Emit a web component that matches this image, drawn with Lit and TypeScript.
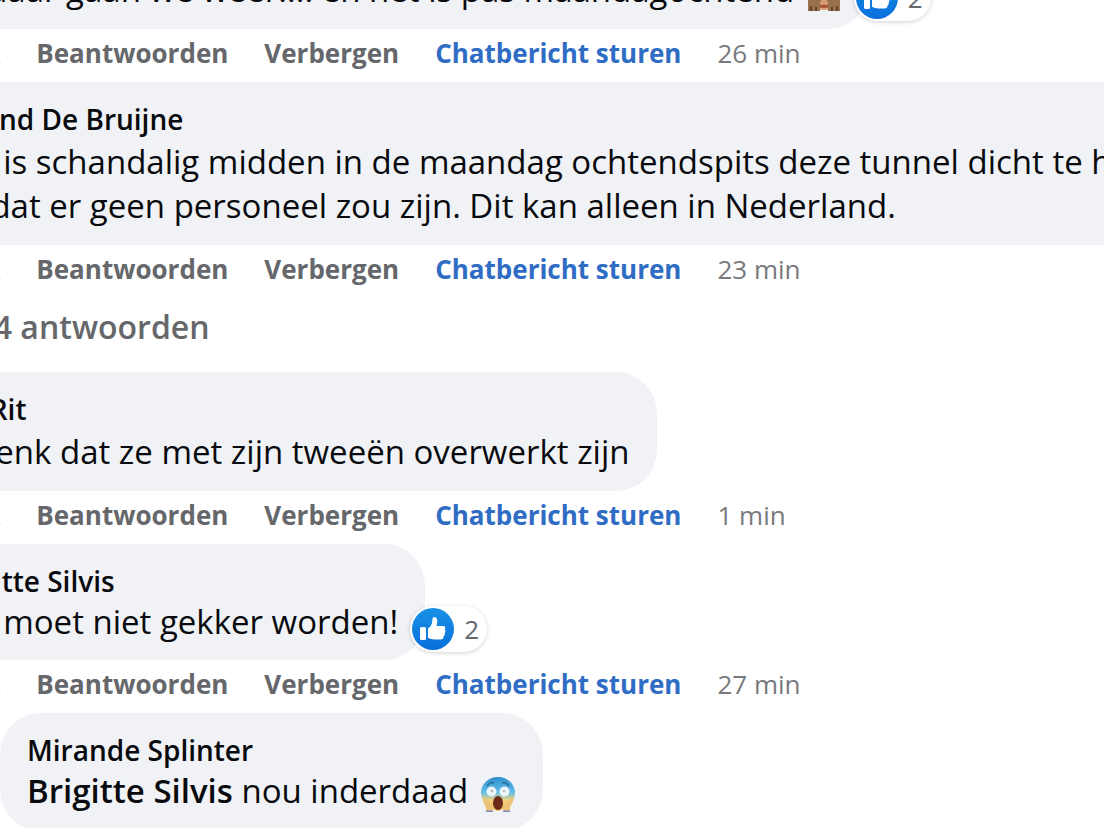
import { LitElement, html, css, svg, nothing } from "lit";
import { customElement, property } from "lit/decorators.js";

type Comment = {
  author: string;
  lines: string[];
  mention?: string;
  emoji?: "monkey" | "scream";
  likes?: number;
  age?: string;
  replies?: string;
  tight?: boolean;
  reply?: boolean;
};

const THREAD: Comment[] = [
  { author: "Daan", lines: ["En daar gaan we weer!!!! en het is pas maandagochtend"], emoji: "monkey", likes: 2, age: "26 min" },
  {
    author: "Roland De Bruijne",
    lines: ["Het is schandalig midden in de maandag ochtendspits deze tunnel dicht te hebben", "omdat er geen personeel zou zijn. Dit kan alleen in Nederland."],
    age: "23 min",
    replies: "Alle 4 antwoorden",
  },
  { author: "Jan Rit", lines: ["Ik denk dat ze met zijn tweeën overwerkt zijn"], age: "1 min" },
  { author: "Brigitte Silvis", lines: ["Het moet niet gekker worden!"], likes: 2, age: "27 min", tight: true },
  { author: "Mirande Splinter", mention: "Brigitte Silvis", lines: ["nou inderdaad"], emoji: "scream", tight: true, reply: true },
];

const thumb = svg`
  <defs><linearGradient id="b" x1="0" y1="0" x2="0" y2="1"><stop offset="0" stop-color="#1892e6"/><stop offset="1" stop-color="#0a6edc"/></linearGradient></defs>
  <circle cx="21" cy="21" r="21" fill="url(#b)"/>
  <rect x="8" y="19" width="6" height="13" rx="1.5" fill="#fff"/>
  <path fill="#fff" d="M16 20.500c2.500-1.500 4-4 4.300-7.500.1-2.500.5-4 2-4 2.600 0 3.300 3 2.900 5.500l-.7 3.500h6.300c2.500 0 3.200 2.200 2 3.700 1 1 .9 2.700-.2 3.500.5 1.200 0 2.400-1 3 .1 2-1 3.300-3.100 3.300h-6c-2.500 0-4.500-.8-6.500-1.700z"/>`;

const scream = svg`
  <defs>
    <linearGradient id="s" x1="0" y1="0" x2="0" y2="1"><stop offset="0" stop-color="#2d8fcc"/><stop offset=".45" stop-color="#63bde8"/><stop offset=".68" stop-color="#efd27e"/><stop offset="1" stop-color="#f0bd4d"/></linearGradient>
  </defs>
  <path fill="url(#s)" d="M18 1C8 1 1 8.500 1 17c0 7 5 15 17 18 12-3 17-11 17-18C35 8.500 28 1 18 1z"/>
  <path d="M7 10c2-3 5-4 7-3M22 7c3-1 5 0 7 3" fill="none" stroke="#276f9e" stroke-width="1.500"/>
  <circle cx="11.500" cy="15.500" r="5" fill="#e9f5fa"/><circle cx="24.500" cy="15.500" r="5" fill="#e9f5fa"/>
  <circle cx="12" cy="15" r="1" fill="#9aa39f"/><circle cx="24" cy="15" r="1" fill="#9aa39f"/>
  <ellipse cx="18" cy="27" rx="5" ry="7" fill="#6d2c19"/>
  <path fill="#ecc478" d="M3 22c2-2 3 0 4 2l5 5c1 3 1 5 0 6H6c1-4-4-8-3-13zM33 22c-2-2-3 0-4 2l-5 5c-1 3-1 5 0 6h6c-1-4 4-8 3-13z"/>
  <path d="M6 35.300h7M23 35.300h7" stroke="#7c86c8" stroke-width="1.400"/>`;

const monkey = svg`
  <circle cx="5" cy="14" r="5" fill="#a9744a"/><circle cx="31" cy="14" r="5" fill="#a9744a"/>
  <circle cx="18" cy="16" r="15" fill="#8a5a3a"/>
  <ellipse cx="18" cy="26" rx="11" ry="9" fill="#d99a72"/>
  <path d="M10 30c4 2 12 2 16 0" fill="none" stroke="#a8503c" stroke-width="3"/>
  <path fill="#97714a" d="M2 36V24l8-12 8 2-2 9-2 5v8zM34 36V24l-8-12-8 2 2 9 2 5v8z"/>
  <path d="M5 36v-5M10 36v-4M26 36v-4M31 36v-5" stroke="#5f4428" stroke-width="2"/>`;

@customElement("comment-item")
class CommentItem extends LitElement {
  @property({ attribute: false }) item!: Comment;

  static styles = css`
    :host { display: block; }
    .comment { display: flex; flex-direction: column; align-items: flex-start; }
    .reply { margin-left: 87px; }
    .bubble {
      position: relative;
      box-sizing: border-box;
      padding: 18px 27px 17px;
      border-radius: 41px;
      background: #f0f2f5;
      color: #080a0e;
      white-space: nowrap;
    }
    .author { display: block; padding-bottom: 2px; font-size: 28px; line-height: 38px; font-weight: 600; color: inherit; text-decoration: none; }
    .text { margin: 0; font-size: 33px; line-height: 44px; }
    .tight { line-height: 39px; padding-bottom: 2px; }
    .line { display: block; }
    .mention { font-weight: 600; color: inherit; text-decoration: none; }
    .emoji { width: 36px; height: 36px; margin: -8px 0 0 3px; vertical-align: -9px; }
    .likes {
      position: absolute;
      left: calc(100% - 15px);
      bottom: 8px;
      display: flex;
      align-items: center;
      gap: 10px;
      box-sizing: border-box;
      height: 46px;
      padding: 0 8px 0 2px;
      border: 0;
      border-radius: 24px;
      background: #fff;
      box-shadow: 0 1px 4px rgba(0, 0, 0, 0.18);
      font: 26px/40px "Open Sans", "Noto Sans", sans-serif;
      color: #65676b;
    }
    .thumb { width: 42px; height: 42px; }
    .actions { display: flex; gap: 36px; margin-left: 24px; height: 53px; white-space: nowrap; }
    .action {
      padding: 0;
      border: 0;
      background: none;
      font: 700 26px/48px "Open Sans", "Noto Sans", sans-serif;
      height: 48px;
      color: #65676b;
    }
    .chat { color: #2f6cc4; }
    .age { font-size: 26px; line-height: 48px; color: #77797d; }
    .replies {
      margin: 0 0 0 15px;
      padding: 0 0 16px;
      border: 0;
      background: none;
      font: 600 32px/58px "Open Sans", "Noto Sans", sans-serif;
      color: #65676b;
    }
  `;

  render() {
    const c = this.item;
    return html`
      <article class="comment ${c.reply ? "reply" : ""}">
        <div class="bubble">
          <a class="author" href="#">${c.author}</a>
          <p class="text ${c.tight ? "tight" : ""}">
            ${c.lines.map(
              (line) => html`<span class="line">${c.mention ? html`<a class="mention" href="#">${c.mention}</a> ` : nothing}${line}${c.emoji
                  ? html` <svg class="emoji" viewBox="0 0 36 36" aria-hidden="true">${c.emoji === "monkey" ? monkey : scream}</svg>`
                  : nothing}</span>`
            )}
          </p>
          ${c.likes
            ? html`<button class="likes"><svg class="thumb" viewBox="0 0 42 42" aria-hidden="true">${thumb}</svg>${c.likes}</button>`
            : nothing}
        </div>
        ${c.age
          ? html`<div class="actions">
              <button class="action">Leuk</button>
              <button class="action">Beantwoorden</button>
              <button class="action">Verbergen</button>
              <button class="action chat">Chatbericht sturen</button>
              <span class="age">${c.age}</span>
            </div>`
          : nothing}
        ${c.replies ? html`<button class="replies">${c.replies}</button>` : nothing}
      </article>
    `;
  }
}

@customElement("app-root")
class AppRoot extends LitElement {
  static styles = css`
    :host {
      display: flow-root;
      height: 100vh;
      overflow: hidden;
      background: #fff;
      font-family: "Open Sans", "Noto Sans", sans-serif;
    }
    .thread { margin: -90px 0 0 -87px; }
  `;

  render() {
    return html`<main class="thread">${THREAD.map((c) => html`<comment-item .item=${c}></comment-item>`)}</main>`;
  }
}
